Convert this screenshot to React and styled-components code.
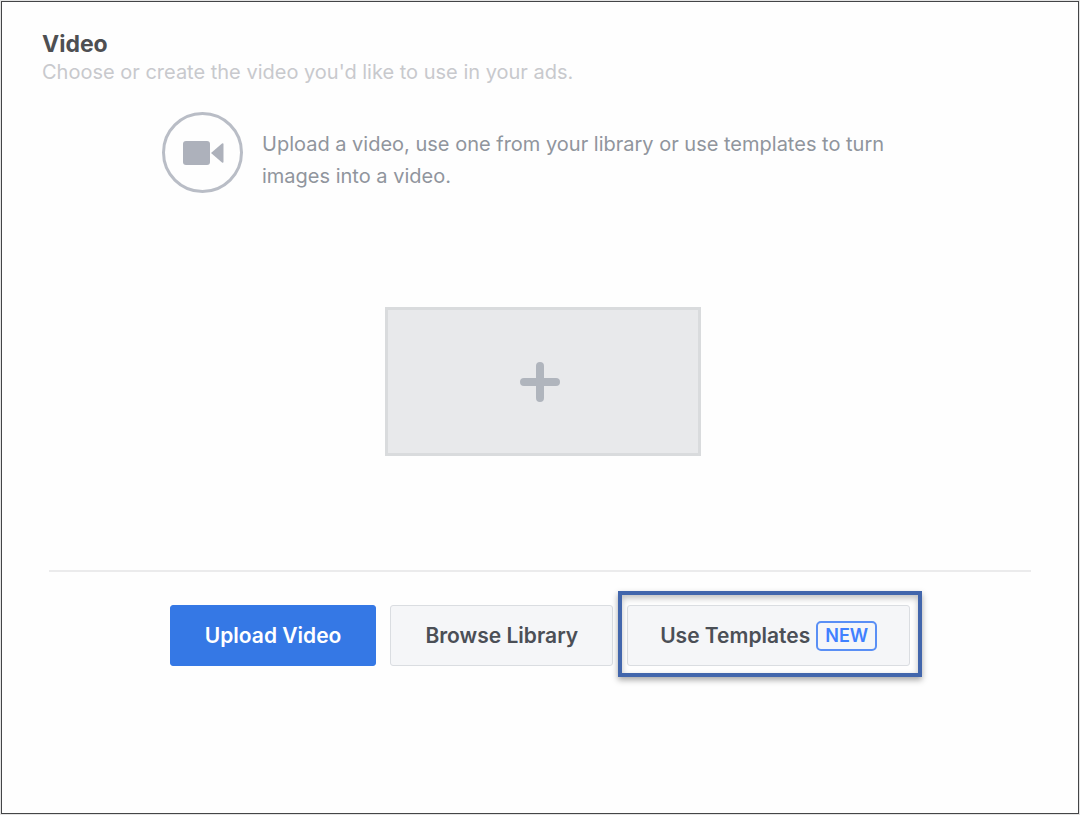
import React from "react";
import styled, { createGlobalStyle } from "styled-components";

const GlobalStyle = createGlobalStyle`
  * {
    box-sizing: border-box;
  }

  body {
    margin: 0;
    background: #e4e4e4;
    font-family: Inter, "Liberation Sans", sans-serif;
    font-size: 20px;
  }
`;

const Panel = styled.main`
  display: flex;
  flex-direction: column;
  min-height: calc(100vh - 2px);
  margin: 1px;
  padding: 27px 40px;
  border: 1px solid #444547;
  background: #fefefe;
`;

const Title = styled.h1`
  margin: 0;
  color: #4e4f52;
  font-size: 23px;
  font-weight: 700;
  line-height: 30px;
`;

const Subtitle = styled.p`
  margin: 0;
  color: #c8c9cd;
  line-height: 26px;
`;

const Intro = styled.section`
  display: flex;
  gap: 19px;
  padding: 27px 120px 0;
`;

const IconCircle = styled.div`
  display: flex;
  flex: none;
  align-items: center;
  justify-content: center;
  width: 81px;
  height: 81px;
  border: 3px solid #b9bdc6;
  border-radius: 50%;
`;

const IntroText = styled.p`
  margin: 0;
  padding-top: 16px;
  color: #90959d;
  line-height: 32px;
`;

const DropArea = styled.div`
  display: flex;
  justify-content: center;
  padding: 114px 0 114px 6px;
`;

const AddButton = styled.button`
  display: flex;
  align-items: center;
  justify-content: center;
  width: 316px;
  height: 149px;
  padding: 0 6px 0 0;
  border: 3px solid #d9dbdd;
  background: #e8e9eb;
`;

const Divider = styled.hr`
  width: calc(100% - 14px);
  margin: 0 auto;
  border: 0;
  border-top: 2px solid #ebebec;
`;

const Actions = styled.div`
  display: flex;
  justify-content: center;
  gap: 14px;
  padding-top: 33px;
`;

const Button = styled.button`
  display: flex;
  align-items: center;
  justify-content: center;
  gap: 6px;
  height: 61px;
  padding: 0 ${(props) => (props.$badged ? 32 : 34)}px;
  border: 1px solid ${(props) => (props.$primary ? "#3578e5" : "#dadde1")};
  border-radius: 3px;
  background: ${(props) => (props.$primary ? "#3578e5" : "#f5f6f8")};
  color: ${(props) => (props.$primary ? "#fff" : "#4b4f56")};
  font: 600 21px/28px Inter, "Liberation Sans", sans-serif;
  white-space: nowrap;
`;

const Highlight = styled.div`
  position: relative;

  &::after {
    content: "";
    position: absolute;
    inset: -14px -12px -11px -9px;
    border: 4px solid #4266ac;
    box-shadow: 0 3px 6px rgba(0, 0, 0, 0.35), inset 0 3px 6px rgba(0, 0, 0, 0.25);
    pointer-events: none;
  }
`;

const Badge = styled.span`
  padding: 0 7px;
  border: 2px solid #5a8ff5;
  border-radius: 5px;
  color: #4080ff;
  font-size: 18px;
  line-height: 26px;
`;

const CameraIcon = () => (
  <svg width="42" height="26" viewBox="0 0 42 26" fill="#adb1bb" aria-hidden="true">
    <rect x="1" y="1" width="27" height="24" rx="3" />
    <path d="M29 13 40 3.5Q41.5 2.5 41.5 4.5V21.5Q41.5 23.5 40 22.5Z" />
  </svg>
);

const PlusIcon = () => (
  <svg width="42" height="42" viewBox="0 0 42 42" stroke="#b0b5bd" strokeWidth="8" strokeLinecap="round" aria-hidden="true">
    <path d="M21 5V37M5 21H37" />
  </svg>
);

const App = () => {
  return (
    <>
      <GlobalStyle />
      <Panel>
        <Title>Video</Title>
        <Subtitle>Choose or create the video you'd like to use in your ads.</Subtitle>

        <Intro>
          <IconCircle>
            <CameraIcon />
          </IconCircle>
          <IntroText>
            Upload a video, use one from your library or use templates to turn images into a video.
          </IntroText>
        </Intro>

        <DropArea>
          <AddButton type="button" aria-label="Add video">
            <PlusIcon />
          </AddButton>
        </DropArea>

        <Divider />

        <Actions>
          <Button type="button" $primary>Upload Video</Button>
          <Button type="button">Browse Library</Button>
          <Highlight>
            <Button type="button" $badged>
              Use Templates
              <Badge>NEW</Badge>
            </Button>
          </Highlight>
        </Actions>
      </Panel>
    </>
  );
};

export default App;
